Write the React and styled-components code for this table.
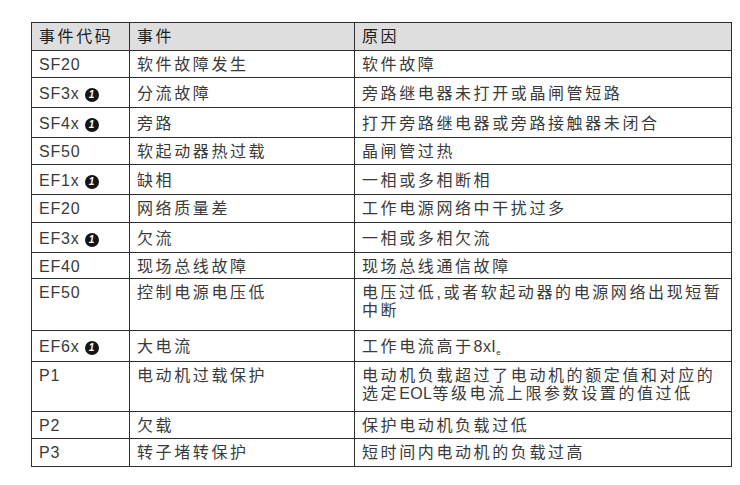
import React from "react";
import styled, { createGlobalStyle } from "styled-components";

const GlobalStyle = createGlobalStyle`
  html, body { margin: 0; padding: 0; background: #ffffff; }
  body { font-family: "Liberation Sans", "Noto Sans CJK SC", sans-serif; }
`;

const Page = styled.div`
  padding: 22px 0 0 31px;
  width: 740px;
  height: 485px;
  box-sizing: border-box;
  overflow: hidden;
`;

const Table = styled.div`
  display: inline-flex;
  flex-direction: column;
  border-top: 1px solid #2e2e2e;
  border-left: 1px solid #2e2e2e;
`;

const Row = styled.div`
  display: grid;
  grid-template-columns: 98px 225px 377px;
  height: ${(p) => p.$h}px;
  background: ${(p) => (p.$head ? "#dedede" : "#ffffff")};
`;

const Cell = styled.div`
  box-sizing: border-box;
  border-right: 1px solid #2e2e2e;
  border-bottom: 1px solid #2e2e2e;
  padding: ${(p) => p.$pt}px 6px 0 7px;
  font-family: "Liberation Sans", "Noto Sans CJK SC", sans-serif;
  font-size: 16px;
  line-height: 18px;
  color: ${(p) => (p.$head ? "#1e1e1e" : "#3a3a3a")};
  letter-spacing: ${(p) => (p.$code ? "0.8px" : "2.6px")};
  white-space: nowrap;
  overflow: hidden;
`;

const CodeLine = styled.div`
  display: flex;
  align-items: center;
  height: 18px;
`;

const Latin = styled.span`
  letter-spacing: 0.4px;
`;

const Badge = styled.span`
  display: inline-flex;
  flex: none;
  align-items: center;
  justify-content: center;
  width: 14px;
  height: 14px;
  margin-left: 5px;
  margin-top: 2px;
  border-radius: 50%;
  background: #151515;
  color: #ffffff;
  font-family: "Liberation Sans", sans-serif;
  font-size: 10px;
  font-style: italic;
  font-weight: bold;
  line-height: 1;
  letter-spacing: 0;
`;

const Sub = styled.sub`
  font-size: 8px;
  vertical-align: -3px;
  letter-spacing: 0;
`;

const rows = [
  { code: "SF20", ev: "软件故障发生", cause: ["软件故障"], h: 27 },
  { code: "SF3x", badge: true, ev: "分流故障", cause: ["旁路继电器未打开或晶闸管短路"], h: 30 },
  { code: "SF4x", badge: true, ev: "旁路", cause: ["打开旁路继电器或旁路接触器未闭合"], h: 30 },
  { code: "SF50", ev: "软起动器热过载", cause: ["晶闸管过热"], h: 27 },
  { code: "EF1x", badge: true, ev: "缺相", cause: ["一相或多相断相"], h: 30 },
  { code: "EF20", ev: "网络质量差", cause: ["工作电源网络中干扰过多"], h: 28 },
  { code: "EF3x", badge: true, ev: "欠流", cause: ["一相或多相欠流"], h: 30 },
  { code: "EF40", ev: "现场总线故障", cause: ["现场总线通信故障"], h: 26 },
  { code: "EF50", ev: "控制电源电压低", cause: ["电压过低,或者软起动器的电源网络出现短暂", "中断"], h: 52 },
  {
    code: "EF6x",
    badge: true,
    ev: "大电流",
    cause: [
      <>
        工作电流高于<Latin>8xI</Latin>
        <Sub>e</Sub>
      </>,
    ],
    h: 31,
  },
  {
    code: "P1",
    ev: "电动机过载保护",
    cause: [
      "电动机负载超过了电动机的额定值和对应的",
      <>
        选定<Latin>EOL</Latin>等级电流上限参数设置的值过低
      </>,
    ],
    h: 50,
  },
  { code: "P2", ev: "欠载", cause: ["保护电动机负载过低"], h: 27 },
  { code: "P3", ev: "转子堵转保护", cause: ["短时间内电动机的负载过高"], h: 28 },
];

export default function App() {
  return (
    <>
      <GlobalStyle />
      <Page>
        <Table>
          <Row $head $h={28}>
            <Cell $head $pt={5}>事件代码</Cell>
            <Cell $head $pt={5}>事件</Cell>
            <Cell $head $pt={5}>原因</Cell>
          </Row>
          {rows.map((r) => {
            const pt = r.badge ? 7 : 5;
            return (
              <Row key={r.code} $h={r.h}>
                <Cell $code $pt={pt}>
                  <CodeLine>
                    {r.code}
                    {r.badge && <Badge>1</Badge>}
                  </CodeLine>
                </Cell>
                <Cell $pt={pt}>{r.ev}</Cell>
                <Cell $pt={pt}>
                  {r.cause.map((c, i) => (
                    <div key={i}>{c}</div>
                  ))}
                </Cell>
              </Row>
            );
          })}
        </Table>
      </Page>
    </>
  );
}
